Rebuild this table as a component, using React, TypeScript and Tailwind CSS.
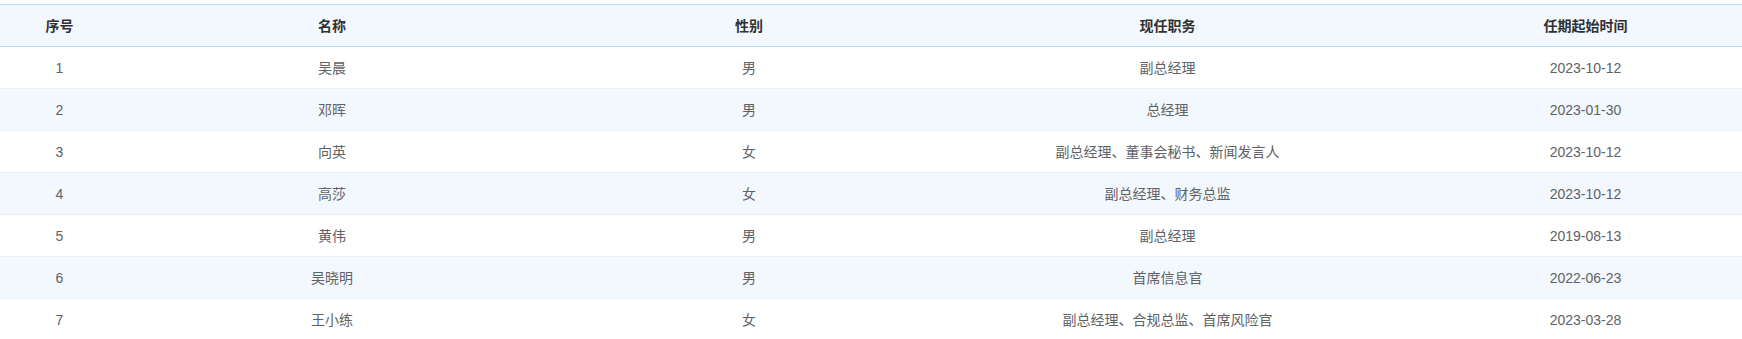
import React from "react";

const rows = [
  ["1", "吴晨", "男", "副总经理", "2023-10-12"],
  ["2", "邓晖", "男", "总经理", "2023-01-30"],
  ["3", "向英", "女", "副总经理、董事会秘书、新闻发言人", "2023-10-12"],
  ["4", "高莎", "女", "副总经理、财务总监", "2023-10-12"],
  ["5", "黄伟", "男", "副总经理", "2019-08-13"],
  ["6", "吴晓明", "男", "首席信息官", "2022-06-23"],
  ["7", "王小练", "女", "副总经理、合规总监、首席风险官", "2023-03-28"],
];

const headers = ["序号", "名称", "性别", "现任职务", "任期起始时间"];

const grid = "grid grid-cols-[119px_426px_408px_429px_407px]";

export default function App() {
  return (
    <div
      className="w-[1742px] h-[339px] overflow-hidden bg-white pt-[4px]"
      style={{ fontFamily: '"Liberation Sans", Arial, "Noto Sans CJK SC", sans-serif' }}
    >
      <div className="w-[1742px] overflow-hidden">
        <div className={`${grid} h-[43px] bg-[#f3f8fe] border-y border-[#b7daf6] text-[14px] font-bold text-[#303133]`}>
          {headers.map((h) => (
            <div key={h} className="flex items-center justify-center leading-none">
              {h}
            </div>
          ))}
        </div>
        {rows.map((r, i) => (
          <div
            key={i}
            className={`${grid} h-[42px] border-b border-[#ebeef5] text-[14px] text-[#606266] ${
              i % 2 === 1 ? "bg-[#f3f8fe]" : "bg-white"
            }`}
          >
            {r.map((c, j) => (
              <div key={j} className="flex items-center justify-center leading-none whitespace-nowrap">
                {c}
              </div>
            ))}
          </div>
        ))}
      </div>
    </div>
  );
}
